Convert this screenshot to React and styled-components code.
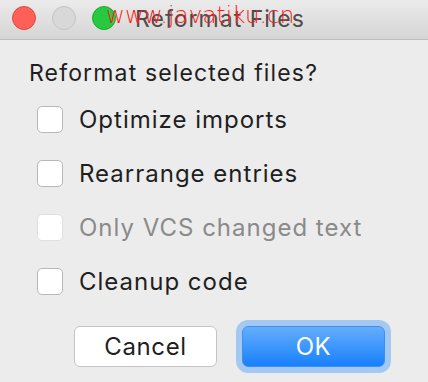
import React from "react";
import styled, { createGlobalStyle } from "styled-components";

const Global = createGlobalStyle`
  html, body {
    margin: 0;
    padding: 0;
    background: #ececec;
  }
  body {
    font-family: "Inter", "Liberation Sans", sans-serif;
  }
`;

const Window = styled.div`
  width: 428px;
  height: 382px;
  background: #ececec;
  display: flex;
  flex-direction: column;
  overflow: hidden;
`;

const TitleBar = styled.div`
  position: relative;
  height: 39px;
  flex-shrink: 0;
  border-bottom: 1px solid #bdbdbd;
  background: linear-gradient(#ebebeb, #d5d5d5);
  display: flex;
  align-items: flex-start;
  justify-content: center;
`;

const Lights = styled.div`
  position: absolute;
  left: 12px;
  top: 6px;
  display: flex;
  gap: 16px;
`;

const Light = styled.span`
  width: 24px;
  height: 24px;
  border-radius: 50%;
  box-sizing: border-box;
  background: ${(p) => p.color};
  border: 1px solid ${(p) => p.edge};
`;

const Title = styled.div`
  font-size: 23px;
  line-height: 26px;
  letter-spacing: 1px;
  color: #4d4d4d;
  margin-left: 12px;
  padding-top: 6px;
`;

const Watermark = styled.div`
  position: absolute;
  left: 106px;
  top: 2px;
  font-family: "DejaVu Sans", sans-serif;
  font-size: 23px;
  font-weight: 200;
  color: #ff1a1a;
  letter-spacing: 0.1px;
`;

const Body = styled.div`
  padding: 20px 0 0 29px;
  display: flex;
  flex-direction: column;
`;

const Heading = styled.div`
  font-size: 23px;
  line-height: 26px;
  letter-spacing: 1.15px;
  color: #1f1f1f;
  margin-bottom: 20px;
`;

const Options = styled.div`
  display: flex;
  flex-direction: column;
  gap: 27px;
  padding-left: 8px;
`;

const Option = styled.label`
  display: flex;
  align-items: center;
  gap: 16px;
  height: 27px;
  line-height: 27px;
  font-size: 24px;
  letter-spacing: 1px;
  color: ${(p) => (p.disabled ? "#8a8a8a" : "#1f1f1f")};
`;

const Box = styled.span`
  width: 26px;
  height: 27px;
  box-sizing: border-box;
  border-radius: 5px;
  background: #fff;
  border: 1px solid ${(p) => (p.disabled ? "#e0e0e0" : "#b8b8b8")};
  flex-shrink: 0;
`;

const Buttons = styled.div`
  display: flex;
  gap: 25px;
  margin-top: 31px;
  padding-left: 74px;
`;

const Button = styled.div`
  width: 143px;
  height: 41px;
  box-sizing: border-box;
  border-radius: 6px;
  display: flex;
  align-items: center;
  justify-content: center;
  font-size: 24px;
  letter-spacing: 0.6px;
  color: ${(p) => (p.primary ? "#ffffff" : "#1f1f1f")};
  background: ${(p) =>
    p.primary ? "linear-gradient(#64aefc, #1880fb)" : "#ffffff"};
  border: 1px solid ${(p) => (p.primary ? "#3d8ff0" : "#c4c4c4")};
  box-shadow: ${(p) => (p.primary ? "0 0 0 6px #a3c9f3" : "none")};
`;

const options = [
  { label: "Optimize imports" },
  { label: "Rearrange entries" },
  { label: "Only VCS changed text", disabled: true },
  { label: "Cleanup code" },
];

const App = () => {
  return (
    <Window>
      <Global />
      <TitleBar>
        <Lights>
          <Light color="#fe5f57" edge="#e2463f" />
          <Light color="#d8d8d8" edge="#c4c4c4" />
          <Light color="#28c840" edge="#1eaa2f" />
        </Lights>
        <Title>Reformat Files</Title>
        <Watermark>www.javatiku.cn</Watermark>
      </TitleBar>
      <Body>
        <Heading>Reformat selected files?</Heading>
        <Options>
          {options.map((o) => (
            <Option key={o.label} disabled={o.disabled}>
              <Box disabled={o.disabled} />
              {o.label}
            </Option>
          ))}
        </Options>
      </Body>
      <Buttons>
        <Button>Cancel</Button>
        <Button primary>OK</Button>
      </Buttons>
    </Window>
  );
};

export default App;
